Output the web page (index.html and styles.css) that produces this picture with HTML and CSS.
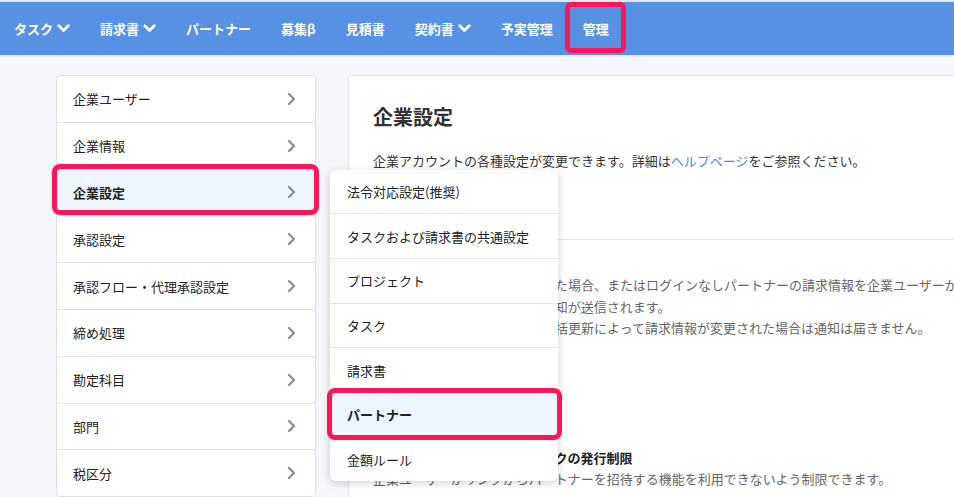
FILE: index.html
```html
<!DOCTYPE html>
<html lang="ja">
<head>
    <meta charset="UTF-8">
    <meta name="viewport" content="width=device-width, initial-scale=1.0">
    <title>企業設定</title>
    <link rel="stylesheet" href="styles.css">
</head>
<body>
    <header class="topnav">
        <a class="nav-item">タスク
            <svg class="caret" width="13" height="9" viewBox="0 0 13 9"><polyline points="1.8,1.8 6.5,6.5 11.2,1.8" /></svg>
        </a>
        <a class="nav-item">請求書
            <svg class="caret" width="13" height="9" viewBox="0 0 13 9"><polyline points="1.8,1.8 6.5,6.5 11.2,1.8" /></svg>
        </a>
        <a class="nav-item">パートナー</a>
        <a class="nav-item">募集β</a>
        <a class="nav-item">見積書</a>
        <a class="nav-item">契約書
            <svg class="caret" width="13" height="9" viewBox="0 0 13 9"><polyline points="1.8,1.8 6.5,6.5 11.2,1.8" /></svg>
        </a>
        <a class="nav-item">予実管理</a>
        <a class="nav-item marked">管理</a>
    </header>

    <div class="layout">
        <ul class="side-menu">
            <li class="side-item">企業ユーザー<svg class="chev" width="9" height="14" viewBox="0 0 9 14"><polyline points="2,2 7,7 2,12" /></svg></li>
            <li class="side-item">企業情報<svg class="chev" width="9" height="14" viewBox="0 0 9 14"><polyline points="2,2 7,7 2,12" /></svg></li>
            <li class="side-item active marked">企業設定<svg class="chev" width="9" height="14" viewBox="0 0 9 14"><polyline points="2,2 7,7 2,12" /></svg>
                <ul class="flyout">
                    <li class="flyout-item">法令対応設定(推奨)</li>
                    <li class="flyout-item">タスクおよび請求書の共通設定</li>
                    <li class="flyout-item">プロジェクト</li>
                    <li class="flyout-item">タスク</li>
                    <li class="flyout-item">請求書</li>
                    <li class="flyout-item active marked">パートナー</li>
                    <li class="flyout-item">金額ルール</li>
                </ul>
            </li>
            <li class="side-item">承認設定<svg class="chev" width="9" height="14" viewBox="0 0 9 14"><polyline points="2,2 7,7 2,12" /></svg></li>
            <li class="side-item">承認フロー・代理承認設定<svg class="chev" width="9" height="14" viewBox="0 0 9 14"><polyline points="2,2 7,7 2,12" /></svg></li>
            <li class="side-item">締め処理<svg class="chev" width="9" height="14" viewBox="0 0 9 14"><polyline points="2,2 7,7 2,12" /></svg></li>
            <li class="side-item">勘定科目<svg class="chev" width="9" height="14" viewBox="0 0 9 14"><polyline points="2,2 7,7 2,12" /></svg></li>
            <li class="side-item">部門<svg class="chev" width="9" height="14" viewBox="0 0 9 14"><polyline points="2,2 7,7 2,12" /></svg></li>
            <li class="side-item">税区分<svg class="chev" width="9" height="14" viewBox="0 0 9 14"><polyline points="2,2 7,7 2,12" /></svg></li>
        </ul>

        <main class="content">
            <section class="content-head">
                <h1>企業設定</h1>
                <p>企業アカウントの各種設定が変更できます。詳細は<a class="link">ヘルプページ</a>をご参照ください。</p>
            </section>
            <section class="content-block">
                <p class="note">パートナーが請求情報を変更した場合、またはログインなしパートナーの請求情報を企業ユーザーが変更した場合</p>
                <p class="note">企業ユーザーの担当者宛てに通知が送信されます。</p>
                <p class="note">ただし、データインポートの一括更新によって請求情報が変更された場合は通知は届きません。</p>

                <h3 class="sub-title">パートナー招待用フォームリンクの発行制限</h3>
                <p class="note">企業ユーザーがリンクからパートナーを招待する機能を利用できないよう制限できます。</p>
            </section>
        </main>
    </div>
</body>
</html>
```

FILE: styles.css
```css
body {
    margin: 0;
    font-family: "Noto Sans CJK JP", "Noto Sans", sans-serif;
    font-size: 13px;
    color: #222;
    background-color: #f4f6fa;
    overflow: hidden;
}

/* top navigation */
.topnav {
    display: flex;
    align-items: stretch;
    height: 53px;
    border-top: 2px solid #e4e7ec;
    background-color: #5691e3;
    box-shadow: 0 1px 2px rgba(0, 0, 0, 0.08);
}
.nav-item {
    position: relative;
    display: flex;
    align-items: center;
    padding: 0 15px;
    color: white;
    font-weight: 700;
    font-size: 13px;
}
.nav-item:first-child {
    padding-left: 14px;
}
.caret {
    margin-left: 4px;
    fill: none;
    stroke: white;
    stroke-width: 2.8;
    stroke-linecap: round;
    stroke-linejoin: round;
}
.nav-item.marked::after {
    content: "";
    position: absolute;
    top: 0;
    bottom: 2px;
    left: -3px;
    right: -2px;
    border: 5px solid #ff1459;
    border-radius: 6px;
}

/* page body */
.layout {
    display: flex;
    align-items: flex-start;
    gap: 32px;
    padding: 20px 0 0 56px;
}

/* side menu */
.side-menu {
    flex: 0 0 258px;
    margin: 0;
    padding: 0;
    list-style: none;
    background-color: white;
    border: 1px solid #dcdfe4;
    border-radius: 4px;
}
.side-item {
    position: relative;
    display: flex;
    align-items: center;
    justify-content: space-between;
    height: 45.8px;
    padding: 0 19px 0 16px;
    border-bottom: 1px solid #dfe2e6;
}
.side-item:last-child {
    border-bottom: none;
}
.side-item.active {
    background-color: #eef5fd;
    font-weight: 700;
}
.side-item.marked::after {
    content: "";
    position: absolute;
    top: -6px;
    bottom: 0;
    left: -5px;
    right: -4px;
    border: 5px solid #ff1459;
    border-radius: 8px;
}
.chev {
    fill: none;
    stroke: #8b9098;
    stroke-width: 2.4;
    stroke-linecap: round;
    stroke-linejoin: round;
}

/* flyout menu */
.flyout {
    position: absolute;
    top: 0;
    left: calc(100% + 15px);
    z-index: 5;
    width: 228px;
    margin: 0;
    padding: 0;
    list-style: none;
    background-color: white;
    border-radius: 6px;
    box-shadow: 0 2px 8px rgba(0, 0, 0, 0.18);
    font-weight: 400;
}
.flyout-item {
    position: relative;
    display: flex;
    align-items: center;
    height: 43.7px;
    padding: 0 17px;
    border-bottom: 1px solid #e2e4e8;
    color: #222;
}
.flyout-item:last-child {
    border-bottom: none;
}
.flyout-item.active {
    background-color: #eef5fd;
    font-weight: 700;
}
.flyout-item.marked::after {
    content: "";
    position: absolute;
    top: -5px;
    bottom: -3px;
    left: -3px;
    right: -4px;
    border: 5px solid #ff1459;
    border-radius: 8px;
}

/* main content */
.content {
    flex: 0 0 700px;
    background-color: white;
    border: 1px solid #e0e3e8;
    border-radius: 4px;
}
.content-head {
    padding: 27px 24px 68px;
}
.content-head h1 {
    margin: 0;
    font-size: 20px;
    line-height: 28px;
    font-weight: 700;
    color: #333;
}
.content-head p {
    margin: 20px 0 0;
    line-height: 20px;
    color: #333;
}
.link {
    color: #4a89dc;
}
.content-block {
    padding: 34px 24px 30px;
    border-top: 1px solid #e3e6ea;
}
.note {
    margin: 0;
    line-height: 21.5px;
    color: #666;
    white-space: nowrap;
}
.sub-title {
    margin: 108px 0 0;
    font-size: 13px;
    line-height: 21px;
    font-weight: 700;
    color: #222;
}
```
